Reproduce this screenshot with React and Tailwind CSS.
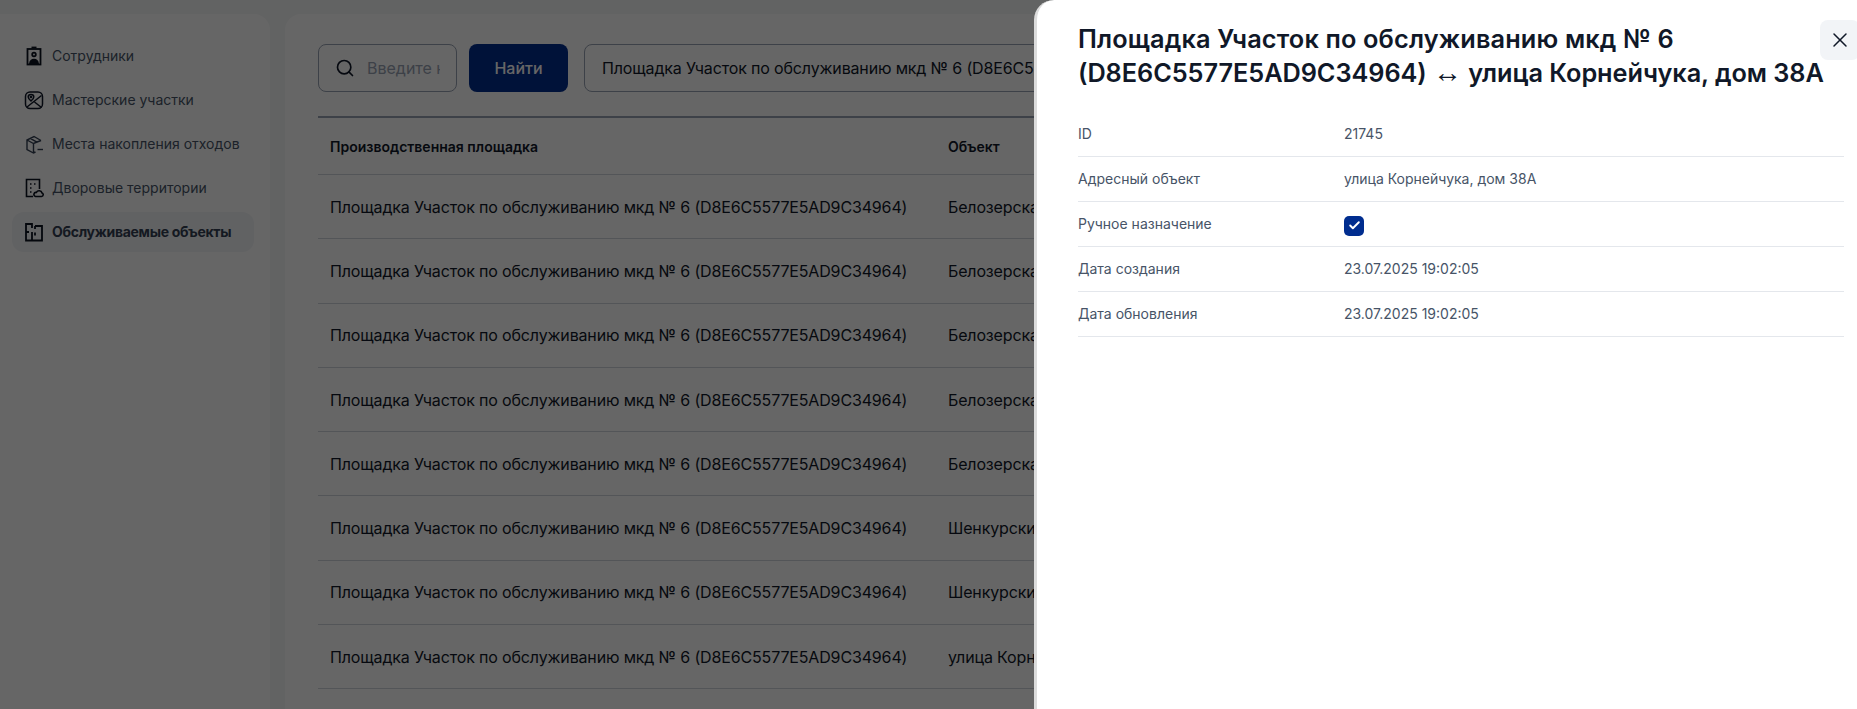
import React from "react";
import { Search, X, Check } from "lucide-react";

const F = { fontFamily: "Inter, 'Noto Sans', sans-serif" };
const IconBadge = () => (
  <svg width="20" height="20" viewBox="0 0 20 20" fill="none" stroke="#0b1220" strokeWidth="1.800"><rect x="3.500" y="3" width="13" height="15.500" /><path d="M7.500 1.500h5" /><circle cx="10" cy="8.500" r="1.800" /><path d="M6 17.500c.4-2.800 2-3.800 4-3.800s3.600 1 4 3.800Z" fill="#0b1220" /></svg>
);
const IconMap = () => (
  <svg width="20" height="20" viewBox="0 0 20 20" fill="none" stroke="#101828" strokeWidth="1.500"><rect x="1.500" y="2" width="17" height="16.500" rx="4.500" /><path d="M3 17 17.500 5.500M10.500 12l7 5.500" /><path d="M7 4.500c-1.800 0-2.800 1.300-2.800 2.500 0 1.300 1.300 2.700 2.800 4 1.500-1.300 2.800-2.700 2.800-4 0-1.200-1-2.500-2.800-2.500Z" /><circle cx="7" cy="7" r=".6" /></svg>
);
const IconBox = () => (
  <svg width="20" height="20" viewBox="0 0 20 20" fill="none" stroke="#344054" strokeWidth="1.400"><path d="M17 6.500 10 2.500 3 6v9.500L9.500 19l2-1M3 6l6.500 3.500L17 6.500M9.500 9.500V19M6.300 4.300l7 4" /><path d="M13.500 15.500h5.500" /></svg>
);
const IconYard = () => (
  <svg width="20" height="20" viewBox="0 0 20 20" fill="none" stroke="#0b1220" strokeWidth="1.600"><path d="M9 18.500H2.500V1.500h13V11" /><path d="M6 6h1.500M10 6h1.500M6 10h1.500M6 14h1.500" /><path d="M11.500 18.500h6a1.800 1.800 0 0 0 .5-3.500 3 3 0 0 0-5.600-.6 2.100 2.100 0 0 0-.900 4.100Z" /></svg>
);
const IconPlan = () => (
  <svg width="20" height="20" viewBox="0 0 20 20" fill="none" stroke="#0b1220" strokeWidth="1.800"><path d="M8 2H2v16.500h16V4h-7" /><path d="M8 1v5M11 4v3M2 10h3M8 10v8.500M11 10.500v3" /></svg>
);

const nav = [
  ["Сотрудники", IconBadge],
  ["Мастерские участки", IconMap],
  ["Места накопления отходов", IconBox],
  ["Дворовые территории", IconYard],
  ["Обслуживаемые объекты", IconPlan, true],
];
const objs = ["Белозерская", "Белозерская", "Белозерская", "Белозерская", "Белозерская", "Шенкурский", "Шенкурский", "улица Корнейчука"];
const site = "Площадка Участок по обслуживанию мкд № 6 (D8E6C5577E5AD9C34964)";
const rows = [
  ["ID", "21745"],
  ["Адресный объект", "улица Корнейчука, дом 38А"],
  ["Ручное назначение", null],
  ["Дата создания", "23.07.2025 19:02:05"],
  ["Дата обновления", "23.07.2025 19:02:05"],
];

export default function App() {
  return (
    <div style={F} className="relative flex h-[709px] w-[1857px] gap-[15px] overflow-hidden bg-[#f6f7f7] pt-[14px]">
      <aside className="w-[270px] shrink-0 rounded-tr-2xl bg-white pl-3 pr-4 pt-[22px]">
        <nav className="flex flex-col gap-1">
          {nav.map(([label, Icon, active]) => (
            <div key={label} className={`flex h-10 items-center gap-2 rounded-xl px-3 text-[14px] ${active ? "bg-[#f2f4f7] font-bold tracking-[-0.3px] text-[#344054]" : "font-normal text-[#475467]"}`}>
              <span className="shrink-0"><Icon /></span>
              <span className="whitespace-nowrap pb-[2px]">{label}</span>
            </div>
          ))}
        </nav>
      </aside>
      <main className="w-[1572px] shrink-0 rounded-tl-2xl bg-white pl-[33px] pr-8 pt-[30px]">
        <div className="flex items-center">
          <div className="flex h-12 w-[139px] items-center rounded-lg border border-[#98a2b3] pl-[16px] pr-[16px]">
            <Search size={20} color="#101828" className="shrink-0" />
            <span className="ml-[12px] overflow-hidden whitespace-nowrap text-[16px] text-[#98a2b3]">Введите название</span>
          </div>
          <button className="ml-[12px] h-12 w-[99px] rounded-lg bg-[#002d8f] text-[16px] font-medium text-white">Найти</button>
          <div className="ml-[16px] flex h-12 w-[700px] items-center whitespace-nowrap rounded-lg border border-[#98a2b3] px-[17px] text-[16px] tracking-[-0.15px] text-[#101828]">{site}</div>
        </div>
        <div className="mt-6 border-t-2 border-[#98a2b3]">
          <div className="flex h-[57px] items-center border-b border-[#d0d5dd] px-3 text-[14px] font-semibold text-[#101828]">
            <span className="w-[618px]">Производственная площадка</span><span>Объект</span>
          </div>
          {objs.map((o, i) => (
            <div key={i} className="flex h-[64.300px] items-center border-b border-[#d0d5dd] px-3 text-[16px] tracking-[-0.15px] text-[#101828]">
              <span className="w-[618px] shrink-0 whitespace-nowrap">{site}</span><span className="whitespace-nowrap">{o}</span>
            </div>
          ))}
        </div>
      </main>

      <div className="absolute inset-0 bg-black/60" />

      <div className="absolute bottom-0 right-0 top-0 w-[823px] overflow-hidden rounded-tl-[20px] border-l-[3px] border-[#dcdcdc] bg-white pl-[41px] pr-[13px] pt-[22px]">
        <h2 className="whitespace-nowrap text-[25.300px] font-semibold leading-[34px] text-[#101828]">
          <span className="tracking-[0.15px]">Площадка Участок по обслуживанию мкд № 6</span><br /><span className="tracking-[-0.05px]">(D8E6C5577E5AD9C34964) <span className="text-[29px] font-normal leading-none" style={{ fontFamily: "'Liberation Sans', sans-serif" }}>↔</span> улица Корнейчука, дом 38А</span>
        </h2>
        <button className="absolute right-[-3px] top-5 flex h-10 w-10 items-center justify-center rounded-lg bg-[#f2f4f7]">
          <X size={24} strokeWidth={1.500} color="#101828" />
        </button>
        <div className="mt-[22px]">
          {rows.map(([k, v]) => (
            <div key={k} className="flex h-[45px] items-center border-b border-[#e4e7ec] pb-[2px] text-[14px] text-[#475467]">
              <span className="w-[266px] shrink-0">{k}</span>
              {v ?? (
                <span className="mt-[5px] flex h-5 w-5 items-center justify-center rounded-[5px] bg-[#002d8f]">
                  <Check size={13} strokeWidth={3.500} color="#fff" />
                </span>
              )}
            </div>
          ))}
        </div>
      </div>
    </div>
  );
}
